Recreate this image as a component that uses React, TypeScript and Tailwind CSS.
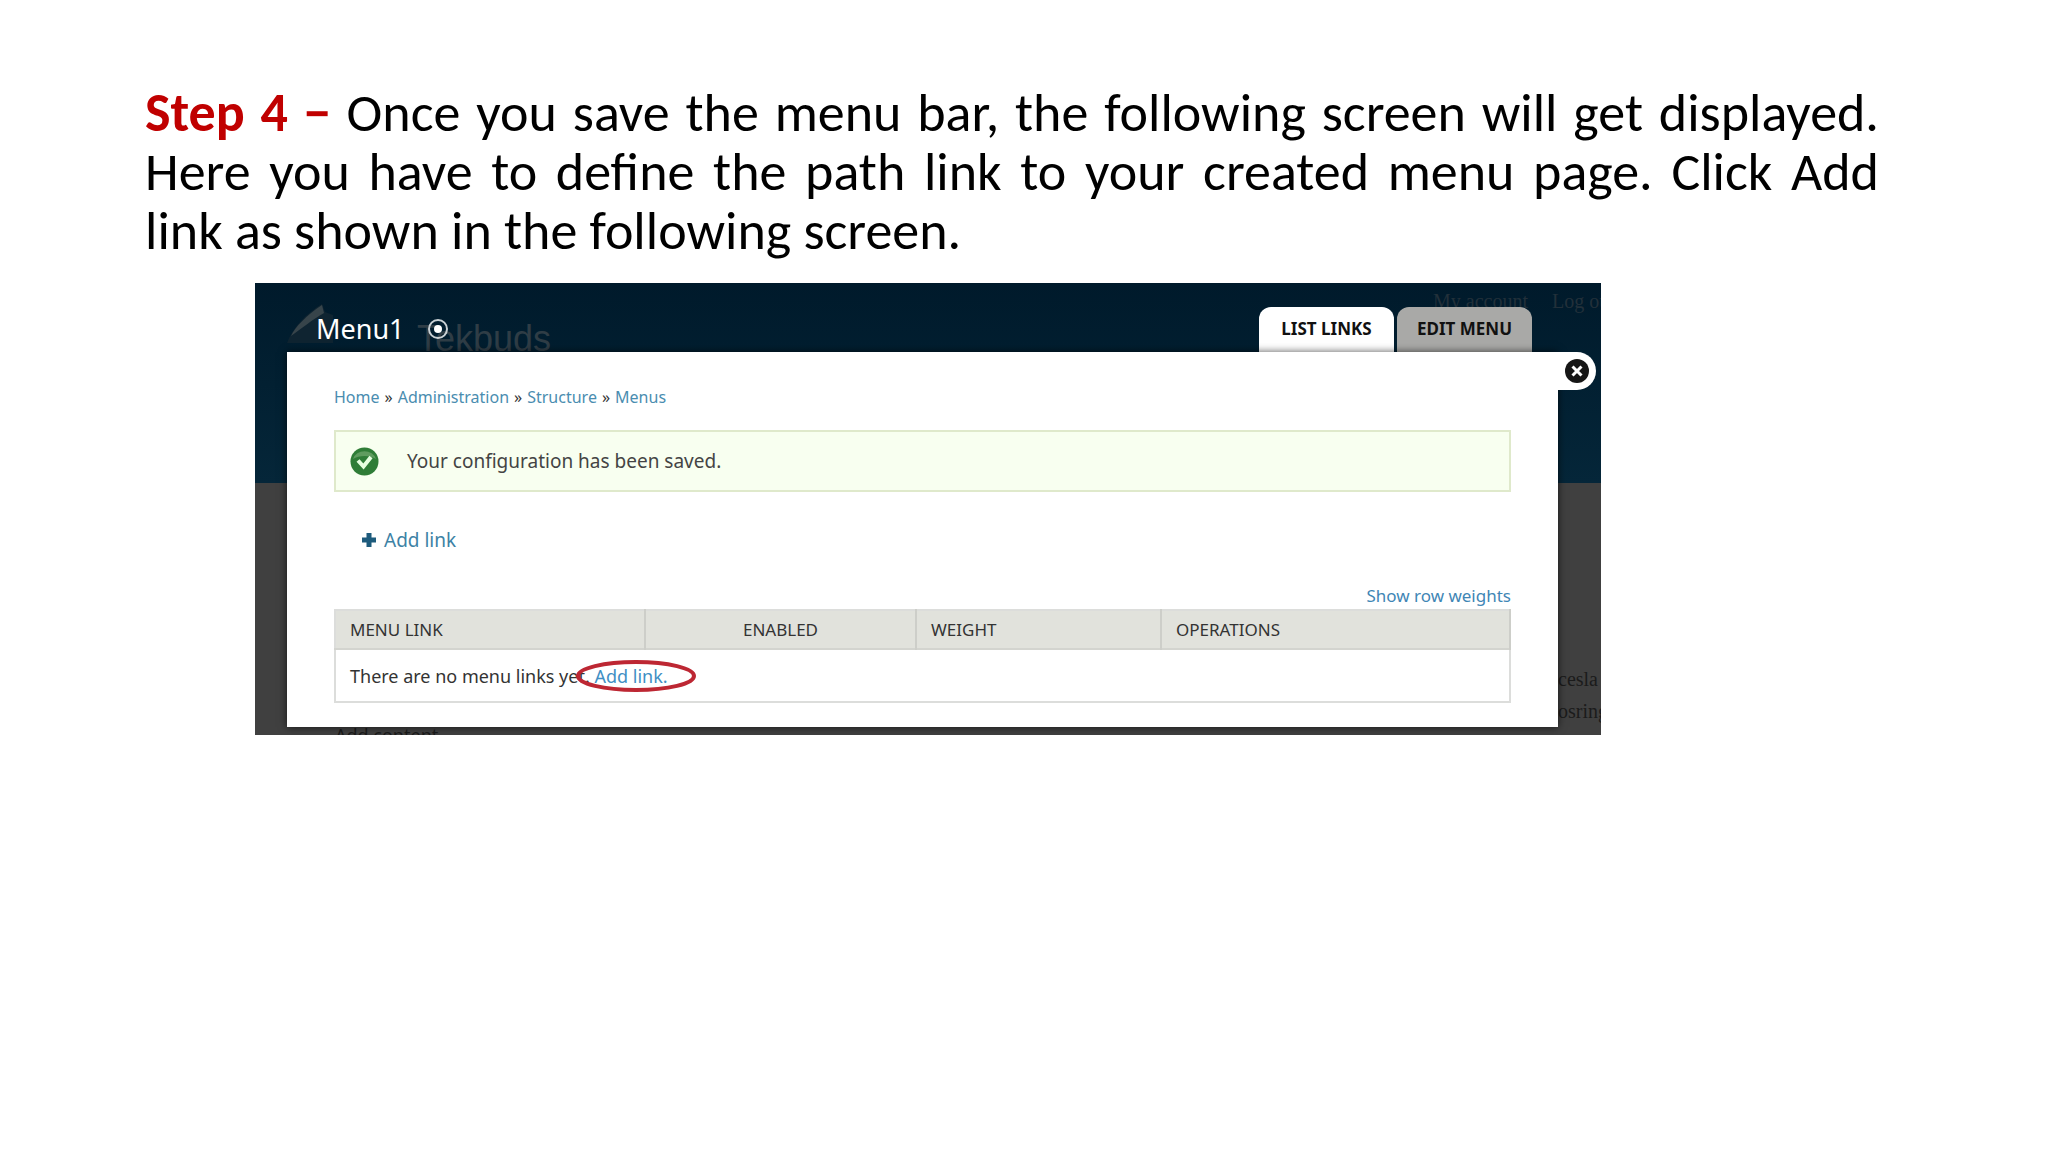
import { clsx } from 'clsx';

const crumbs = ['Home', 'Administration', 'Structure', 'Menus'];

const columns = [
  { label: 'Menu link', className: 'w-[310px] text-left' },
  { label: 'Enabled', className: 'w-[271px] text-center' },
  { label: 'Weight', className: 'w-[245px] text-left' },
  { label: 'Operations', className: 'text-left' },
];

function Tab({ label, active }: { label: string; active?: boolean }) {
  return (
    <button
      type="button"
      className={clsx(
        'h-[45px] w-[135px] rounded-t-xl pb-0.5 text-[17px] font-bold uppercase text-[#111]',
        active ? 'bg-white' : 'bg-[#a9a9a7]'
      )}
    >
      {label}
    </button>
  );
}

function Breadcrumb() {
  return (
    <nav className="flex gap-[5px] text-base leading-5 text-[#333]">
      {crumbs.map((crumb, i) => (
        <span key={crumb} className="flex gap-[5px]">
          {i > 0 && <span>»</span>}
          <a href="#" className="text-[#4a8db0]">
            {crumb}
          </a>
        </span>
      ))}
    </nav>
  );
}

function StatusMessage() {
  return (
    <div className="mt-[23px] flex h-[62px] items-center gap-7 border-2 border-[#dfe9cb] bg-[#f8fff0] pl-[14px] text-[19px] text-[#444]">
      <svg width="29" height="29" viewBox="0 0 29 29">
        <circle cx="14.5" cy="14.5" r="14" fill="#2f7d37" />
        <path d="M3 12a12 11 0 0 1 23 0c-6-4-17-4-23 0z" fill="#5f9c5f" />
        <path d="M8 13.5l5.5 6L21 10" fill="none" stroke="#e6ffe0" strokeWidth="4" />
      </svg>
      Your configuration has been saved.
    </div>
  );
}

function LinksTable() {
  return (
    <table className="w-full table-fixed border-2 border-[#dcdddb]">
      <thead>
        <tr className="h-[39px] border-b-2 border-[#d3d4cf] bg-[#e1e2dc] text-[17px] leading-6">
          {columns.map((col) => (
            <th
              key={col.label}
              className={clsx('border-r-2 border-[#cdcec9] px-[14px] font-normal uppercase text-[#333]', col.className)}
            >
              {col.label}
            </th>
          ))}
        </tr>
      </thead>
      <tbody>
        <tr className="h-[53px] text-lg leading-6">
          <td colSpan={4} className="px-[14px] text-[#333]">
            There are no menu links yet.{' '}
            <a href="#" className="relative text-[#3f8fc4]">
              Add link.
              <svg
                className="absolute -left-[18px] -top-1 h-8 w-[120px]"
                viewBox="0 0 120 32"
                fill="none"
              >
                <ellipse cx="60" cy="16" rx="58" ry="14" stroke="#bd2733" strokeWidth="4" />
              </svg>
            </a>
          </td>
        </tr>
      </tbody>
    </table>
  );
}

function MenuScreen() {
  return (
    <figure className="relative ml-[110px] mr-[278px] mt-[22px] overflow-hidden bg-[#404040] pb-2 pl-8 pr-[43px] pt-6 font-['Noto_Sans',sans-serif]">
      {/* dimmed site behind the overlay */}
      <div className="absolute inset-x-0 top-0 h-[200px] bg-linear-to-b from-[#001a2b] to-[#052639]">
        <svg className="absolute left-8 top-5 h-10 w-12" viewBox="0 0 48 40">
          <path d="M0 40C6 24 20 10 35 1l3 8 8 3v28z" fill="#0f2431" />
          <path d="M4 33C8 24 20 12 35 2l2 8C26 16 14 26 4 33z" fill="#37444a" />
        </svg>
        <span className="absolute left-[162px] top-[34px] font-['Liberation_Sans',sans-serif] text-4xl leading-11 text-[#2f3d46]">
          Tekbuds
        </span>
        <div className="absolute right-0 top-1.5 flex gap-6 whitespace-nowrap font-['Liberation_Serif',serif] text-xl leading-6 text-[#22303a]">
          <span>My account</span>
          <span className="w-[49px]">Log out</span>
        </div>
      </div>
      <div className="absolute bottom-2 right-0 w-[43px] whitespace-nowrap font-['Liberation_Serif',serif] text-xl leading-8 text-[#1b1b1b]">
        <p>cesla</p>
        <p>osring</p>
      </div>
      <span className="absolute -bottom-3 left-20 text-lg leading-6 text-[#1b1b1b]">Add content</span>

      <div className="relative flex items-start justify-between pr-[26px]">
        <div className="flex items-center gap-[22px] pl-[29px] pt-1 text-white">
          <h2 className="text-[27px] leading-9">Menu1</h2>
          <svg width="22" height="22" viewBox="0 0 22 22">
            <circle cx="11" cy="11" r="9" fill="none" stroke="#c9d0d4" strokeWidth="2" />
            <circle cx="11" cy="11" r="4" fill="#fff" />
          </svg>
        </div>
        <div className="flex gap-[3px]">
          <Tab label="List links" active />
          <Tab label="Edit menu" />
        </div>
      </div>

      <div className="relative bg-white px-[47px] pb-6 pt-[35px] shadow-[0_0_8px_#000a]">
        <button
          type="button"
          aria-label="Close"
          className="absolute -right-[38px] top-0 h-[38px] w-[42px] rounded-r-full bg-white pl-[11px]"
        >
          <svg width="24" height="24" viewBox="0 0 24 24">
            <circle cx="12" cy="12" r="12" fill="#161616" />
            <path d="M7.5 7.5l9 9M16.5 7.5l-9 9" stroke="#fff" strokeWidth="3" />
          </svg>
        </button>
        <Breadcrumb />
        <StatusMessage />
        <a href="#" className="ml-7 mt-9 flex items-center gap-2 text-[19px] leading-6 text-[#3d82a5]">
          <svg width="14" height="14" viewBox="0 0 14 14">
            <path d="M7 0v14M0 7h14" stroke="#1d5b7c" strokeWidth="5" />
          </svg>
          Add link
        </a>
        <div className="mt-8 pb-px text-right text-[17px] leading-6">
          <a href="#" className="text-[#3f86b5]">
            Show row weights
          </a>
        </div>
        <LinksTable />
      </div>
    </figure>
  );
}

export default function App() {
  return (
    <main className="min-h-screen bg-white pl-[145px] pr-[169px] pt-[84px]">
      <p className="text-justify font-['Carlito','Lato',sans-serif] text-[54px] leading-[59px] text-black">
        <strong className="text-[#c00000]">Step 4 −</strong> Once you save the menu bar, the following screen will get
        displayed. Here you have to define the path link to your created menu page. Click Add link&nbsp;as shown in the
        following screen.
      </p>
      <MenuScreen />
    </main>
  );
}
